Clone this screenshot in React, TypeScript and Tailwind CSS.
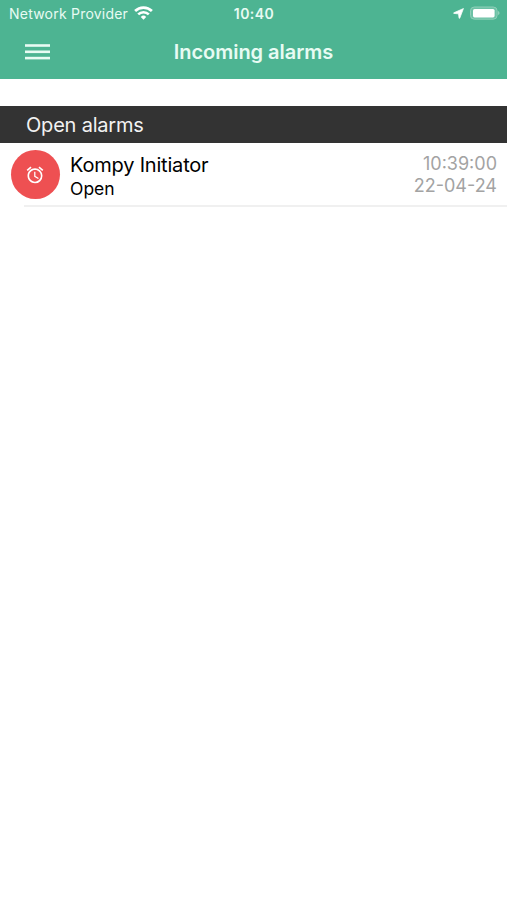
import { MdAccessAlarm } from 'react-icons/md'

interface Alarm {
  id: number
  name: string
  status: string
  time: string
  date: string
}

const ALARMS: Alarm[] = [
  { id: 1, name: 'Kompy Initiator', status: 'Open', time: '10:39:00', date: '22-04-24' },
]

function StatusBar() {
  return (
    <div className="grid h-7 grid-cols-[1fr_auto_1fr] items-center pl-[9px] pr-[7px] text-[#e8fbf3]">
      <div className="flex items-center gap-[6px]">
        <span className="whitespace-nowrap text-[14px] leading-7 tracking-[0.22px]">Network Provider</span>
        <svg className="-mt-[2px] h-[14px] w-[19px]" viewBox="0 0 19 14" fill="none" stroke="white">
          <path d="M1.1 5a12 12 0 0 1 16.8 0" strokeWidth="2.7" />
          <path d="M4.2 8.4a7.5 7.5 0 0 1 10.6 0" strokeWidth="2.6" />
          <path d="M9.5 13.8l-2.7-2.9a3.9 3.9 0 0 1 5.4 0z" fill="white" stroke="none" />
        </svg>
      </div>
      <span className="-ml-[1px] text-[14px] font-semibold leading-7 tracking-[0.45px]">10:40</span>
      <div className="flex items-center justify-end gap-[5px]">
        <svg className="-mt-[2px] h-[11px] w-[11px]" viewBox="0 0 12 12" fill="white" stroke="white" strokeWidth="0.8">
          <path d="M11.4.6L7.4 11q-.4.9-.8 0L6 6.4 1.1 5.9q-1-.3 0-.8z" />
        </svg>
        <svg className="-mt-[2px] h-[14px] w-[31px]" viewBox="0 0 31 14">
          <rect x="1.5" y="1" width="26.6" height="12.2" rx="3.8" fill="#6cc1a5" stroke="#8fd0b9" strokeWidth="1" />
          <rect x="4" y="3" width="21.6" height="8.4" rx="1.6" fill="white" />
          <path d="M29 5v4q1.6-.6 1.6-2t-1.6-2z" fill="#8fd0b9" />
        </svg>
      </div>
    </div>
  )
}

function NavBar() {
  return (
    <div className="grid h-[51px] grid-cols-[1fr_auto_1fr] items-center pl-[25px] pr-[25px]">
      <button className="-mt-[3px] w-[25px]" aria-label="Menu">
        <svg className="block h-4 w-[25px]" viewBox="0 0 25 16" fill="#e8fbf3">
          <rect y="0.2" width="25" height="2.6" />
          <rect y="6.5" width="25" height="2.6" />
          <rect y="12.8" width="25" height="2.6" />
        </svg>
      </button>
      <h1 className="pb-[3px] text-[20px] font-semibold leading-[46px] tracking-[-0.03px] text-[#e8fbf3]">Incoming alarms</h1>
    </div>
  )
}

function AlarmRow({ alarm }: { alarm: Alarm }) {
  return (
    <li>
      <div className="flex h-[62px] items-center pl-[11px] pr-[10px]">
        <div className="flex h-[49px] w-[49px] shrink-0 items-center justify-center rounded-full bg-[#ee5052] pr-[2px] pt-px text-white">
          <MdAccessAlarm className="h-5 w-5" />
        </div>
        <div className="ml-[10px] flex-1 pt-[6px] text-black">
          <p className="text-[20px] leading-6 tracking-[-0.2px]">{alarm.name}</p>
          <p className="text-[17.5px] leading-6">{alarm.status}</p>
        </div>
        <div className="pt-[2px] text-right text-[18px] leading-[22px] text-[#a3a3a3]">
          <p>{alarm.time}</p>
          <p>{alarm.date}</p>
        </div>
      </div>
      <div className="ml-6 h-[2px] bg-[#f0f0f0]" />
    </li>
  )
}

export default function App() {
  return (
    <div className="h-[900px] w-full overflow-hidden bg-white font-['Inter',sans-serif]">
      <header className="h-[79px] bg-[#4db492]">
        <StatusBar />
        <NavBar />
      </header>
      <main className="pt-[27px]">
        <h2 className="h-[37px] bg-[#333333] pl-[26px] text-[20px] leading-[38px] tracking-[-0.2px] text-[#f2f2f2]">
          Open alarms
        </h2>
        <ul>
          {ALARMS.map((alarm) => (
            <AlarmRow key={alarm.id} alarm={alarm} />
          ))}
        </ul>
      </main>
    </div>
  )
}
